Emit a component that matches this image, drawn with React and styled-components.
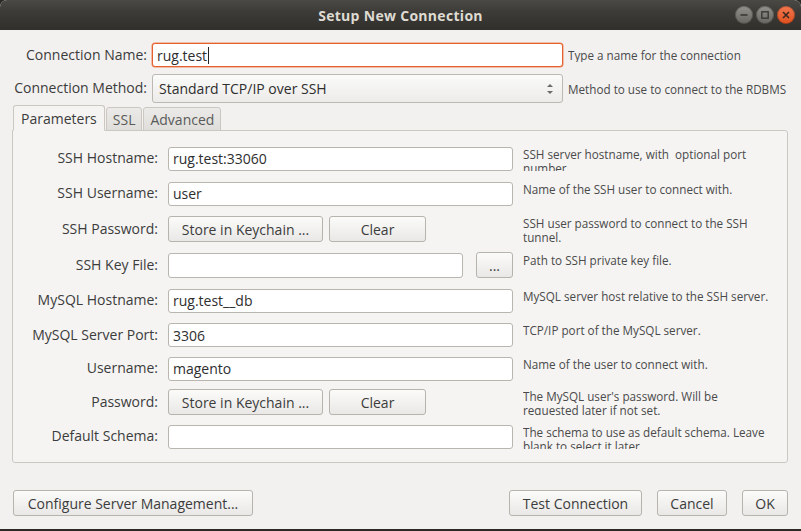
import React from "react";
import styled, { createGlobalStyle } from "styled-components";

const GlobalStyle = createGlobalStyle`
  html, body {
    margin: 0;
    padding: 0;
    background: #2b2a27;
  }
  * {
    box-sizing: border-box;
  }
`;

const Window = styled.div`
  width: 801px;
  height: 529px;
  display: flex;
  flex-direction: column;
  background: #f2f1f0;
  font-family: "Open Sans", "Noto Sans", sans-serif;
  color: #3c3c3c;
  border-radius: 7px 7px 0 0;
  overflow: hidden;
`;

const TitleBar = styled.div`
  height: 30px;
  flex: none;
  position: relative;
  display: flex;
  align-items: center;
  justify-content: center;
  background: linear-gradient(#4a4944, #3c3b37 40%, #302f2b);
  color: #dfdbd2;
  font-size: 14px;
  font-weight: 700;
  letter-spacing: 0.3px;
`;

const WinControls = styled.div`
  position: absolute;
  right: 6px;
  top: 6px;
  display: flex;
  gap: 3px;
`;

const WinButton = styled.div`
  width: 18px;
  height: 18px;
  border-radius: 50%;
  display: flex;
  align-items: center;
  justify-content: center;
  background: ${({ close }) =>
    close
      ? "linear-gradient(#f47850, #e0501e)"
      : "linear-gradient(#93928d, #66655f)"};
  box-shadow: inset 0 0 0 1px rgba(0, 0, 0, 0.25);
`;

const Body = styled.div`
  flex: 1;
  display: flex;
  flex-direction: column;
  padding: 13px 13px 13px 12px;
`;

const TopGrid = styled.div`
  display: grid;
  grid-template-columns: 135px 411px 1fr;
  column-gap: 5px;
  row-gap: 7px;
  align-items: center;
`;

const Label = styled.div`
  text-align: right;
  font-size: 14px;
  white-space: nowrap;
  color: #3c3c3c;
  margin-top: -2px;
`;

const Input = styled.div`
  height: ${({ h }) => h || 24}px;
  background: #fff;
  border: 1px solid ${({ focus }) => (focus ? "#e4602f" : "#b9b5af")};
  box-shadow: ${({ focus }) => (focus ? "0 0 0 0.5px #f08a60" : "none")};
  border-radius: 3px;
  padding: 0 4px;
  display: flex;
  align-items: center;
  font-size: 14px;
  color: #2e2e2e;
  white-space: nowrap;
  overflow: hidden;
`;

const Caret = styled.span`
  display: inline-block;
  width: 1px;
  height: 17px;
  background: #222;
  margin-left: 1px;
`;

const Select = styled.div`
  height: 29px;
  border: 1px solid #bcb8b2;
  border-radius: 3px;
  background: linear-gradient(#fbfbfa, #ecebe9);
  padding: 0 8px 0 6px;
  display: flex;
  align-items: center;
  justify-content: space-between;
  font-size: 14px;
  color: #2e2e2e;
`;

const Help = styled.div`
  font-size: 11.7px;
  line-height: 14px;
  color: #4a4a4a;
  height: ${({ h }) => (h ? `${h}px` : "auto")};
  overflow: hidden;
  padding-right: 4px;
  white-space: ${({ single }) => (single ? "nowrap" : "pre-wrap")};
`;

const Tabs = styled.div`
  display: flex;
  margin-top: 2px;
  padding-left: 1px;
  height: 26px;
  align-items: flex-end;
  position: relative;
  z-index: 1;
`;

const Tab = styled.div`
  height: ${({ active }) => (active ? 26 : 24)}px;
  padding: 0 ${({ active }) => (active ? 7 : 6)}px;
  display: flex;
  align-items: center;
  font-size: 14px;
  color: ${({ active }) => (active ? "#3c3c3c" : "#5a5a5a")};
  border: 1px solid #cbc7c1;
  border-bottom: ${({ active }) => (active ? "1px solid #f5f4f3" : "1px solid #cbc7c1")};
  border-radius: 3px 3px 0 0;
  background: ${({ active }) =>
    active ? "#f5f4f3" : "linear-gradient(#ebeae8, #dfdedb)"};
  margin-right: 1px;
`;

const Panel = styled.div`
  margin-top: -1px;
  height: 333px;
  border: 1px solid #cbc7c1;
  border-radius: 0 3px 3px 3px;
  background: #f5f4f3;
  padding: 10px 10px 8px 0;
  display: grid;
  grid-template-columns: 145px 345px 1fr;
  grid-template-rows: 35px 35px 36px 36px 35px 34px 33px 34px 35px;
  column-gap: 10px;
  align-items: center;
`;

const ButtonPair = styled.div`
  display: flex;
  gap: 6px;
`;

const KeyRow = styled.div`
  display: flex;
  gap: 13px;
  align-items: center;
`;

const Field = styled.div`
  flex: 1;
`;

const Button = styled.div`
  height: 26px;
  width: ${({ w }) => (w ? `${w}px` : "auto")};
  flex: none;
  padding: 0 10px;
  border: 1px solid #b7b3ad;
  border-radius: 3px;
  background: linear-gradient(#fbfbfa, #e9e8e6);
  display: flex;
  align-items: center;
  justify-content: center;
  font-size: 14px;
  color: #3c3c3c;
  white-space: nowrap;
`;

const Footer = styled.div`
  margin-top: auto;
  display: flex;
  align-items: center;
  gap: 15px;
  padding: 0 0 0 1px;
`;

const Spacer = styled.div`
  flex: 1;
`;

const Arrows = () => (
  <svg width="8" height="14" viewBox="0 0 8 14">
    <path d="M1 5 L4 2 L7 5 Z" fill="#6a6a6a" />
    <path d="M1 9 L4 12 L7 9 Z" fill="#6a6a6a" />
  </svg>
);

const rows = [
  { label: "SSH Hostname:", value: "rug.test:33060", help: "SSH server hostname, with  optional port number." },
  { label: "SSH Username:", value: "user", help: "Name of the SSH user to connect with." },
  { label: "SSH Password:", keychain: true, help: "SSH user password to connect to the SSH tunnel." },
  { label: "SSH Key File:", file: true, help: "Path to SSH private key file." },
  { label: "MySQL Hostname:", value: "rug.test__db", help: "MySQL server host relative to the SSH server." },
  { label: "MySQL Server Port:", value: "3306", help: "TCP/IP port of the MySQL server." },
  { label: "Username:", value: "magento", help: "Name of the user to connect with." },
  { label: "Password:", keychain: true, help: "The MySQL user's password. Will be requested later if not set." },
  { label: "Default Schema:", value: "", help: "The schema to use as default schema. Leave blank to select it later." },
];

const App = () => {
  return (
    <>
      <GlobalStyle />
      <Window>
        <TitleBar>
          Setup New Connection
          <WinControls>
            <WinButton>
              <svg width="10" height="10" viewBox="0 0 10 10">
                <path d="M1.5 5 H8.5" stroke="#3a3935" strokeWidth="1.6" />
              </svg>
            </WinButton>
            <WinButton>
              <svg width="10" height="10" viewBox="0 0 10 10">
                <rect x="1.8" y="1.8" width="6.4" height="6.4" fill="none" stroke="#3a3935" strokeWidth="1.4" />
              </svg>
            </WinButton>
            <WinButton close>
              <svg width="10" height="10" viewBox="0 0 10 10">
                <path d="M2 2 L8 8 M8 2 L2 8" stroke="#3a2a22" strokeWidth="1.6" />
              </svg>
            </WinButton>
          </WinControls>
        </TitleBar>
        <Body>
          <TopGrid>
            <Label>Connection Name:</Label>
            <Input focus>
              rug.test
              <Caret />
            </Input>
            <Help single>Type a name for the connection</Help>
            <Label>Connection Method:</Label>
            <Select>
              <span>Standard TCP/IP over SSH</span>
              <Arrows />
            </Select>
            <Help single>Method to use to connect to the RDBMS</Help>
          </TopGrid>
          <Tabs>
            <Tab active>Parameters</Tab>
            <Tab>SSL</Tab>
            <Tab>Advanced</Tab>
          </Tabs>
          <Panel>
            {rows.map((row) => (
              <React.Fragment key={row.label}>
                <Label>{row.label}</Label>
                {row.keychain ? (
                  <ButtonPair>
                    <Button w={155}>Store in Keychain ...</Button>
                    <Button w={97}>Clear</Button>
                  </ButtonPair>
                ) : row.file ? (
                  <KeyRow>
                    <Field>
                      <Input h={25} />
                    </Field>
                    <Button w={37}>...</Button>
                  </KeyRow>
                ) : (
                  <Input>{row.value}</Input>
                )}
                <Help h={row.keychain ? 26 : 24}>{row.help}</Help>
              </React.Fragment>
            ))}
          </Panel>
          <Footer>
            <Button w={240}>Configure Server Management...</Button>
            <Spacer />
            <Button w={133}>Test Connection</Button>
            <Button w={70}>Cancel</Button>
            <Button w={46}>OK</Button>
          </Footer>
        </Body>
      </Window>
    </>
  );
};

export default App;
